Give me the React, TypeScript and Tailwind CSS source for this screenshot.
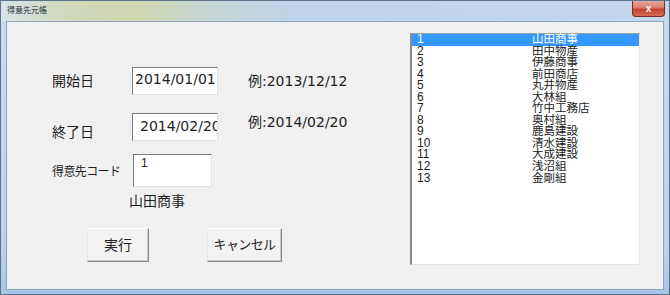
import React from "react";

const items = [
  "山田商事",
  "田中物産",
  "伊藤商事",
  "前田商店",
  "丸井物産",
  "大林組",
  "竹中工務店",
  "奥村組",
  "鹿島建設",
  "清水建設",
  "大成建設",
  "浅沼組",
  "金剛組",
];

export default function App() {
  return (
    <div className="w-[670px] h-[295px] overflow-hidden bg-[linear-gradient(to_bottom,#c9dbee_0%,#bcd2ea_85%,#a9c4e4_100%)] border border-[#5d718a] flex flex-col font-['DejaVu_Sans','Noto_Sans_CJK_JP',sans-serif] text-[#1e1e1e]">
      {/* title bar */}
      <div className="h-[20px] flex items-start justify-between bg-[linear-gradient(to_right,#d9e3e8_0%,#d0d8bc_10%,#cfd6b0_20%,#c8d6d2_30%,#bfd3ea_45%,#c4d7ec_100%)]">
        <div className="pl-[6px] pt-[3px] text-[8px] leading-[14px] text-[#1c2a3a]">得意先元帳</div>
        <div className="mr-[4px] w-[33px] h-[16px] rounded-b-[4px] border border-t-0 border-[#7a2a22] bg-[linear-gradient(to_bottom,#e6a99e_0%,#d77a6c_45%,#c2402f_55%,#d56a55_100%)] flex items-center justify-center">
          <span className="text-white text-[10px] font-bold leading-[10px] font-['Liberation_Sans',sans-serif]">x</span>
        </div>
      </div>
      {/* client area */}
      <div className="flex-1 mx-[5px] mb-[4px] border border-[#8ea2ba] bg-[#f0f0f0] flex">
        {/* left panel */}
        <div className="w-[403px] flex flex-col pt-[45px] pl-[45px]">
          {/* row 1 */}
          <div className="flex items-start h-[28px]">
            <div className="w-[80px] mt-[4px] text-[14px] leading-[20px]">開始日</div>
            <div className="w-[86px] h-[28px] bg-white border border-t-[#7a7a7a] border-l-[#7a7a7a] border-r-[#e2e2e2] border-b-[#e2e2e2] overflow-hidden whitespace-nowrap pl-[2px] text-[14px] leading-[22px]">
              2014/01/01
            </div>
            <div className="ml-[30px] mt-[4px] text-[14px] leading-[20px] whitespace-nowrap">例:2013/12/12</div>
          </div>
          {/* row 2 */}
          <div className="flex items-start h-[28px] mt-[18px]">
            <div className="w-[80px] mt-[9px] text-[14px] leading-[20px]">終了日</div>
            <div className="w-[86px] h-[28px] bg-white border border-t-[#7a7a7a] border-l-[#7a7a7a] border-r-[#e2e2e2] border-b-[#e2e2e2] overflow-hidden whitespace-nowrap pl-[7px] text-[14px] leading-[24px]">
              2014/02/20
            </div>
            <div className="ml-[30px] mt-[-1px] text-[14px] leading-[20px] whitespace-nowrap">例:2014/02/20</div>
          </div>
          {/* row 3 */}
          <div className="flex items-start h-[33px] mt-[13px]">
            <div className="w-[81px] mt-[10px] text-[12px] leading-[16px] whitespace-nowrap tracking-[-0.6px]">得意先コード</div>
            <div className="w-[79px] h-[33px] bg-white border border-t-[#7a7a7a] border-l-[#7a7a7a] border-r-[#e2e2e2] border-b-[#e2e2e2] pl-[7px] text-[12px] leading-[16px] font-['Liberation_Sans',sans-serif]">
              1
            </div>
          </div>
          {/* row 4 */}
          <div className="mt-[4px] ml-[77px] text-[14px] leading-[20px]">山田商事</div>
          {/* row 5 */}
          <div className="flex mt-[17px]">
            <div className="ml-[35px] w-[62px] h-[34px] bg-[#f2f2f2] border border-t-[#fdfdfd] border-l-[#e6e6e6] border-r-[#8a8a8a] border-b-[#8a8a8a] shadow-[inset_-1px_-1px_0_#c8c8c8] flex items-center justify-center text-[14px] leading-[20px]">
              実行
            </div>
            <div className="ml-[58px] w-[75px] h-[34px] bg-[#f2f2f2] border border-t-[#fdfdfd] border-l-[#e6e6e6] border-r-[#8a8a8a] border-b-[#8a8a8a] shadow-[inset_-1px_-1px_0_#c8c8c8] flex items-center justify-center text-[13px] tracking-[-0.6px] leading-[20px] whitespace-nowrap">
              キャンセル
            </div>
          </div>
        </div>
        {/* list box */}
        <div className="mt-[11px] w-[230px] h-[232px] bg-white border-t border-l-2 border-r border-b border-t-[#a0a0a0] border-l-[#8a8a8a] border-r-[#e8e8e8] border-b-[#e3e3e3] flex flex-col font-['Liberation_Sans','Noto_Sans_CJK_JP',sans-serif] text-[12px]">
          {items.map((name, i) => (
            <div
              key={i}
              className={
                i === 0
                  ? "flex h-[11.55px] leading-[11.55px] bg-[#3399ff] text-white"
                  : "flex h-[11.55px] leading-[11.55px] text-[#222]"
              }
            >
              <span className="w-[120px] pl-[5px]">{i + 1}</span>
              <span className="whitespace-nowrap text-[11.5px]">{name}</span>
            </div>
          ))}
        </div>
      </div>
    </div>
  );
}
